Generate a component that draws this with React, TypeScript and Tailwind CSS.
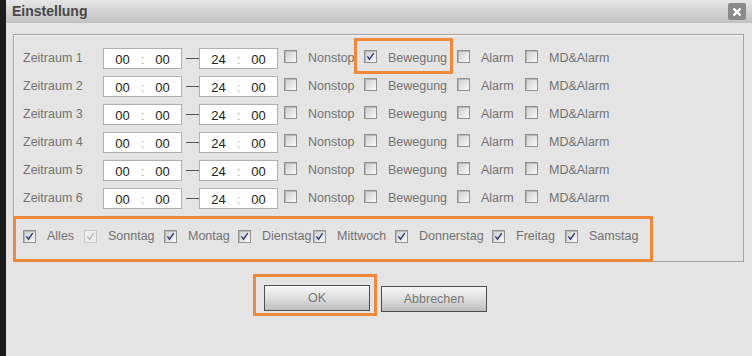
import React from 'react';

const Cb = ({ on = false, dim = false }: { on?: boolean; dim?: boolean }) => (
  <span
    className={
      dim
        ? 'flex h-[13px] w-[13px] shrink-0 items-center justify-center border border-[#c9c9c9] bg-[#ececec]'
        : 'flex h-[13px] w-[13px] shrink-0 items-center justify-center border border-[#8f9090] bg-linear-to-br from-[#cccccc] to-[#fafafa] shadow-[inset_1px_1px_0_#b8b8b8]'
    }
  >
    {on && (
      <svg width="11" height="11" viewBox="0 0 11 11">
        <path
          d="M2.4 5.4 L4.5 8.2 L8.7 2.2"
          fill="none"
          stroke={dim ? '#b8b8b8' : '#2d3d74'}
          strokeWidth="1.4"
        />
      </svg>
    )}
  </span>
);

const TimeBox = ({ a, b }: { a: string; b: string }) => (
  <div className="flex h-[21px] w-[79px] items-center justify-center border border-[#b0b0b0] bg-white pt-[3px] text-[13px] text-[#222]">
    <span className="w-[26px] text-center">{a}</span>
    <span className="w-[14px] text-center text-[#999]">:</span>
    <span className="w-[26px] text-center">{b}</span>
  </div>
);

const Item = ({ label, w, on = false, mark = false }: { label: string; w: string; on?: boolean; mark?: boolean }) => (
  <div className={`relative flex h-[21px] items-center ${w}`}>
    {mark && <span className="absolute left-[-10px] top-[-10px] h-[36px] w-[99px] border-[3px] border-[#ef8839]" />}
    <span className="mb-[5px]">
      <Cb on={on} />
    </span>
    <span className="ml-[11px] whitespace-nowrap">{label}</span>
  </div>
);

const Row = ({ n }: { n: number }) => (
  <div className="flex h-[21px] items-center">
    <span className="w-[80px] whitespace-nowrap">Zeitraum {n}</span>
    <TimeBox a="00" b="00" />
    <span className="ml-[4px] h-px w-[13px] bg-[#555]" />
    <TimeBox a="24" b="00" />
    <div className="ml-[6px] flex">
      <Item label="Nonstop" w="w-[80px]" />
      <Item label="Bewegung" w="w-[93px]" on={n === 1} mark={n === 1} />
      <Item label="Alarm" w="w-[68px]" />
      <Item label="MD&Alarm" w="w-[100px]" />
    </div>
  </div>
);

const days: { label: string; w: string; dim?: boolean }[] = [
  { label: 'Alles', w: 'w-[61px]' },
  { label: 'Sonntag', w: 'w-[80px]', dim: true },
  { label: 'Montag', w: 'w-[74px]' },
  { label: 'Dienstag', w: 'w-[75px]' },
  { label: 'Mittwoch', w: 'w-[82px]' },
  { label: 'Donnerstag', w: 'w-[97px]' },
  { label: 'Freitag', w: 'w-[73px]' },
  { label: 'Samstag', w: 'w-[70px]' },
];

export default function App() {
  return (
    <div className="flex h-[356px] w-[752px] bg-[#1d1d1d] font-['Liberation_Sans',Arial,sans-serif] text-[12.5px] text-[#727272]">
      <div className="ml-[6px] flex flex-1 flex-col bg-[#e4e4e4]">
        {/* title bar */}
        <div className="flex h-[23px] items-center justify-between bg-linear-to-b from-[#e6e6e6] to-[#c2c2c2] pl-[6px] pr-[6px]">
          <span className="text-[14px] font-bold text-[#474747]">Einstellung</span>
          <span className="flex h-[17px] w-[18px] items-center justify-center rounded-[2px] bg-[#8a8a8a]">
            <svg width="10" height="10" viewBox="0 0 10 10">
              <path d="M1.5 1.5 L8.5 8.5 M8.5 1.5 L1.5 8.5" stroke="#fff" strokeWidth="2.4" />
            </svg>
          </span>
        </div>

        {/* group box */}
        <div className="ml-[7px] mr-[8px] mt-[11px] border border-[#a2a2a2] shadow-[inset_1px_1px_0_#f4f4f4]">
          <div className="flex flex-col gap-[7px] pl-[9px] pt-[13px]">
            {[1, 2, 3, 4, 5, 6].map((n) => (
              <Row key={n} n={n} />
            ))}
          </div>
          <div className="-mb-px -ml-px mt-[7px] flex h-[46px] w-[640px] items-start border-[3px] border-[#ef8839] pl-[7px] pt-[8px]">
            {days.map((d) => (
              <div key={d.label} className={`flex items-center ${d.w}`}>
                <Cb on dim={d.dim} />
                <span className="ml-[11px] whitespace-nowrap">{d.label}</span>
              </div>
            ))}
          </div>
        </div>

        {/* buttons */}
        <div className="mt-[12px] flex items-start pl-[247px]">
          <div className="border-[3px] border-[#ef8839] pb-[2px] pl-[8px] pr-[4px] pt-[8px]">
            <button className="h-[26px] w-[106px] border border-[#4d4d4d] bg-linear-to-b from-[#f7f7f7] via-[#dedede] to-[#bdbdbd] text-[#777]">
              OK
            </button>
          </div>
          <button className="ml-[4px] mt-[12px] h-[26px] w-[106px] border border-[#4d4d4d] bg-linear-to-b from-[#f7f7f7] via-[#dedede] to-[#bdbdbd] text-[#777]">
            Abbrechen
          </button>
        </div>
      </div>
    </div>
  );
}
